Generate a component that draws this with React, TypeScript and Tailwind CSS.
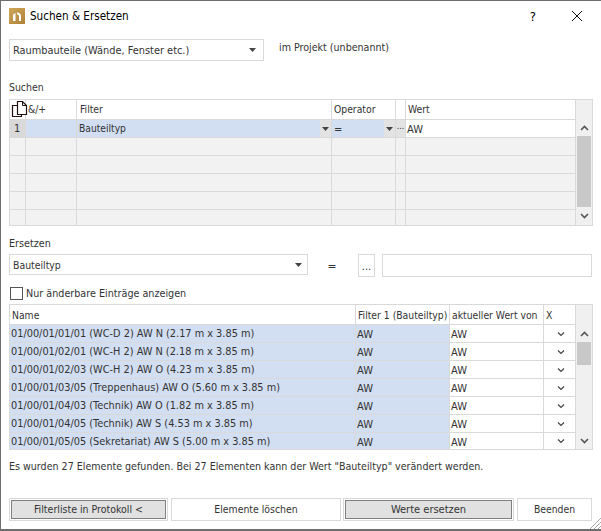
import React from "react";

const font = { fontFamily: '"DejaVu Sans Condensed", "DejaVu Sans", sans-serif' };
const line = "border-[#d9d9d9]";

function Caret({ cls = "" }: { cls?: string }) {
  return (
    <svg width="7" height="4" viewBox="0 0 7 4" className={cls}>
      <path d="M0 0h7L3.5 4z" fill="#444" />
    </svg>
  );
}

function Chevron({ up = false, color = "#555" }: { up?: boolean; color?: string }) {
  return (
    <svg width="9" height="6" viewBox="0 0 9 6">
      <path d={up ? "M1 5l3.5-3.5L8 5" : "M1 1l3.5 3.5L8 1"} fill="none" stroke={color} strokeWidth="1.6" />
    </svg>
  );
}

function Check() {
  return (
    <svg width="8" height="6" viewBox="0 0 8 6">
      <path d="M1 1.5l3 3 3-3" fill="none" stroke="#444" strokeWidth="1.2" />
    </svg>
  );
}

const searchCols = "grid-cols-[16px_51px_255px_64px_10px_170px]";
const resultCols = "grid-cols-[346px_94px_94px_32px]";

const names = [
  "01/00/01/01/01 (WC-D 2) AW N (2.17 m x 3.85 m)",
  "01/00/01/02/01 (WC-H 2) AW N (2.18 m x 3.85 m)",
  "01/00/01/02/03 (WC-H 2) AW O (4.23 m x 3.85 m)",
  "01/00/01/03/05 (Treppenhaus) AW O (5.60 m x 3.85 m)",
  "01/00/01/04/03 (Technik) AW O (1.82 m x 3.85 m)",
  "01/00/01/04/05 (Technik) AW S (4.53 m x 3.85 m)",
  "01/00/01/05/05 (Sekretariat) AW S (5.00 m x 3.85 m)",
];

function Cell({ children, cls = "" }: { children?: React.ReactNode; cls?: string }) {
  return (
    <div className={`flex items-center overflow-hidden whitespace-nowrap border-r border-b ${line} ${cls}`}>
      {children}
    </div>
  );
}

export default function App() {
  return (
    <div
      style={font}
      className="relative flex h-[531px] w-[601px] flex-col overflow-hidden border-l border-t border-b-2 border-[#6e6e6e] bg-white text-[11px] leading-none text-[#333]"
    >
      {/* Title bar */}
      <div className="flex h-[31px] shrink-0 items-center pl-[8px]">
        <div className="mb-[1px] flex h-[16px] w-[16px] items-center justify-center bg-gradient-to-br from-[#cfa758] to-[#ae8238]">
          <svg width="10" height="11" viewBox="0 0 10 11">
            <path d="M1 3.5L3.5 2v8H1z" fill="#fff" />
            <path d="M5 1.5C7.5 1.5 9 3 9 5v5H7V5.2C7 4 6.2 3.4 5 3.4z" fill="#fff" />
          </svg>
        </div>
        <span className="ml-[5px] text-[11.6px] text-black">Suchen &amp; Ersetzen</span>
        <span className="mb-[1px] ml-auto text-[13px] text-black">?</span>
        <svg width="12" height="12" viewBox="0 0 12 12" className="mb-[2px] ml-[35px] mr-[18px]">
          <path d="M1 1l10 10M11 1L1 11" stroke="#111" strokeWidth="1" fill="none" />
        </svg>
      </div>

      {/* Scope */}
      <div className="mt-[7px] flex h-[22px] shrink-0 pl-[8px]">
        <div className={`flex w-[255px] items-center justify-between border ${line} pl-[3px] pr-[7px]`}>
          <span className="pt-[2px] text-[10.9px]">Raumbauteile (Wände, Fenster etc.)</span>
          <Caret />
        </div>
        <span className="ml-[15px] mt-[3px] text-[10.6px]">im Projekt (unbenannt)</span>
      </div>

      <div className="mt-[21px] h-[12px] shrink-0 pl-[8px] text-[10.4px]">Suchen</div>

      {/* Search table */}
      <div className={`ml-[8px] mt-[5px] flex h-[127px] w-[584px] shrink-0 border ${line}`}>
        <div className="w-[566px] shrink-0">
          <div className={`grid ${searchCols} h-[20px] text-[10.3px]`}>
            <Cell cls="relative overflow-visible">
              <svg width="17" height="18" viewBox="0 0 17 18" className="absolute left-[1px] top-[0px]">
                <path d="M1.5 5.5h9v11h-9z" fill="#fff" stroke="#201010" strokeWidth="1.2" />
                <path d="M6.5 1.5h5l4 4v9h-9z" fill="#fff" stroke="#201010" strokeWidth="1.2" />
                <path d="M11.5 1.5v4h4" fill="none" stroke="#201010" />
              </svg>
            </Cell>
            <Cell cls="pl-[2px]">&amp;/+</Cell>
            <Cell cls="pl-[3px]">Filter</Cell>
            <Cell cls="pl-[2px]">Operator</Cell>
            <Cell />
            <Cell cls="pl-[2px]">Wert</Cell>
          </div>
          <div className={`grid ${searchCols} h-[18px]`}>
            <Cell cls="bg-[#d9d9d9] pl-[4px]">1</Cell>
            <Cell cls="bg-[#d2def1]" />
            <Cell cls="justify-between bg-[#d2def1] pl-[2px]">
              <span className="pt-[2px] text-[10.2px]">Bauteiltyp</span>
              <span className="flex h-full w-[11px] items-center justify-center bg-[#e3e3e3]">
                <Caret cls="shrink-0" />
              </span>
            </Cell>
            <Cell cls="justify-between bg-[#d2def1] pl-[2px]">
              <span className="pt-[2px]">=</span>
              <span className="flex h-full w-[11px] items-center justify-center bg-[#e3e3e3]">
                <Caret cls="shrink-0" />
              </span>
            </Cell>
            <Cell cls="justify-center bg-[#e3e3e3] pb-[4px] text-[9px]">...</Cell>
            <Cell cls="pl-[1px] pt-[2px]">AW</Cell>
          </div>
          {[18, 18, 18, 18, 15].map((h, i) => (
            <div key={i} className={`grid ${searchCols} ${h === 18 ? "h-[18px]" : "h-[15px]"}`}>
              {[0, 1, 2, 3, 4, 5].map((c) => (
                <Cell key={c} cls={`bg-[#f2f2f2] ${i === 4 ? "border-b-0" : ""}`} />
              ))}
            </div>
          ))}
        </div>
        <div className="flex flex-1 flex-col bg-[#f0f0f0]">
          <div className="h-[20px]" />
          <div className="flex h-[16px] items-center justify-center"><Chevron up /></div>
          <div className="mx-[1px] h-[71px] bg-[#c8c8c8]" />
          <div className="flex flex-1 items-center justify-center"><Chevron /></div>
        </div>
      </div>

      <div className="mt-[13px] h-[12px] shrink-0 pl-[8px] text-[10.7px]">Ersetzen</div>

      {/* Replace row */}
      <div className="mt-[3px] flex h-[23px] shrink-0 items-stretch pl-[8px]">
        <div className={`mb-[2px] flex w-[299px] items-center justify-between border ${line} pl-[3px] pr-[5px]`}>
          <span className="pt-[2px] text-[10.4px]">Bauteiltyp</span>
          <Caret />
        </div>
        <span className="ml-[18px] flex w-[12px] items-center justify-center text-[12px]">=</span>
        <div className={`ml-[20px] flex w-[17px] items-end justify-center border ${line} pb-[4px] text-[11px]`}>...</div>
        <div className={`ml-[7px] w-[210px] border ${line}`} />
      </div>

      {/* Checkbox */}
      <div className="mt-[10px] flex h-[13px] shrink-0 items-center pl-[9px]">
        <div className="h-[13px] w-[13px] border border-[#555]" />
        <span className="ml-[3px] pt-[2px] text-[10.7px]">Nur änderbare Einträge anzeigen</span>
      </div>

      {/* Results */}
      <div className={`ml-[8px] mt-[4px] flex h-[146px] w-[584px] shrink-0 border ${line}`}>
        <div className="w-[566px] shrink-0">
          <div className={`grid ${resultCols} h-[20px] text-[10.3px]`}>
            <Cell cls="pl-[2px] pt-[2px]">Name</Cell>
            <Cell cls="pl-[2px] pt-[2px]">Filter 1 (Bauteiltyp)</Cell>
            <Cell cls="pl-[2px] pt-[2px]">aktueller Wert von</Cell>
            <Cell cls="pl-[2px] pt-[2px]">X</Cell>
          </div>
          {names.map((n, i) => (
            <div key={n} className={`grid ${resultCols} ${i === 6 ? "h-[16px]" : "h-[18px]"}`}>
              <Cell cls={`bg-[#d2def1] pl-[1px] pt-[2px] text-[10.85px] ${i === 6 ? "border-b-0" : ""}`}>{n}</Cell>
              <Cell cls={`bg-[#d2def1] pl-[1px] pt-[2px] ${i === 6 ? "border-b-0" : ""}`}>AW</Cell>
              <Cell cls={`pl-[1px] pt-[2px] ${i === 6 ? "border-b-0" : ""}`}>AW</Cell>
              <Cell cls={`justify-center pl-[2px] ${i === 6 ? "border-b-0" : ""}`}><Check /></Cell>
            </div>
          ))}
        </div>
        <div className="flex flex-1 flex-col bg-[#f0f0f0]">
          <div className="h-[20px]" />
          <div className="flex h-[17px] items-center justify-center"><Chevron up /></div>
          <div className="mx-[1px] h-[23px] bg-[#c8c8c8]" />
          <div className="mb-[1px] mt-auto flex h-[14px] items-center justify-center"><Chevron /></div>
        </div>
      </div>

      <div className="mt-[11px] h-[12px] shrink-0 pl-[8px] text-[10.6px]">
        Es wurden 27 Elemente gefunden. Bei 27 Elementen kann der Wert "Bauteiltyp" verändert werden.
      </div>

      {/* Buttons */}
      <div className="mt-[25px] flex h-[23px] shrink-0 pl-[8px]">
        <div className={`w-[159px] border ${line} bg-white p-[1px]`}>
          <div className="flex h-full items-center justify-center border border-[#808080] bg-[#e1e1e1] text-[10.5px]">Filterliste in Protokoll &lt;</div>
        </div>
        <div className={`ml-[3px] flex w-[170px] items-center justify-center border ${line} text-[10.4px]`}>Elemente löschen</div>
        <div className={`ml-[2px] w-[171px] border ${line} bg-white p-[1px]`}>
          <div className="flex h-full items-center justify-center border border-[#808080] bg-[#e1e1e1]">Werte ersetzen</div>
        </div>
        <div className={`ml-[3px] flex w-[75px] items-center justify-center border ${line} text-[10.3px]`}>Beenden</div>
      </div>

      {/* Resize grip */}
      <svg width="12" height="12" viewBox="0 0 12 12" className="absolute bottom-0 right-0">
        <path d="M12 1L1 12M12 5l-7 7M12 9l-3 3" stroke="#a8a8a8" strokeWidth="1" fill="none" />
      </svg>
    </div>
  );
}
